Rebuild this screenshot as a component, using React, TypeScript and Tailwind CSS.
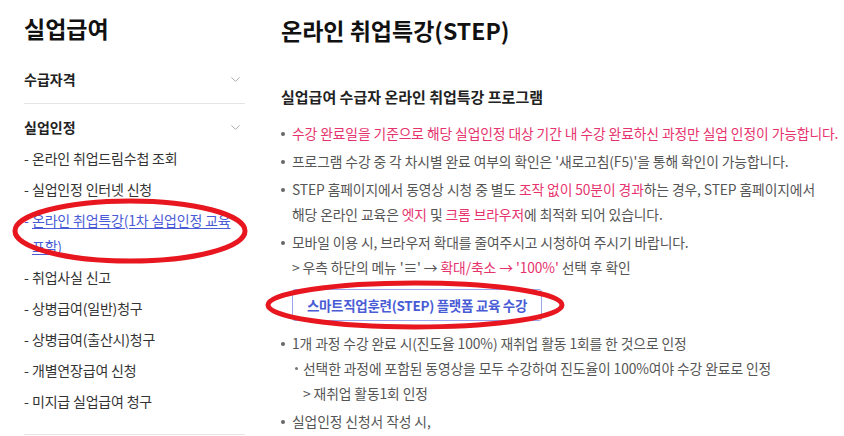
import { ChevronDown } from "lucide-react";

const subItems = [
  { name: "온라인 취업드림수첩 조회" },
  { name: "실업인정 인터넷 신청" },
  { name: "온라인 취업특강(1차 실업인정 교육 포함)", active: true },
  { name: "취업사실 신고" },
  { name: "상병급여(일반)청구" },
  { name: "상병급여(출산시)청구" },
  { name: "개별연장급여 신청" },
  { name: "미지급 실업급여 청구" },
];

function Dot({ small }: { small?: boolean }) {
  return (
    <span
      className={
        small
          ? "mt-[11px] ml-[3px] h-[3px] w-[3px] shrink-0 rounded-full bg-[#777]"
          : "mt-[11px] h-[4px] w-[4px] shrink-0 rounded-full bg-[#666]"
      }
    />
  );
}

function Sidebar() {
  return (
    <aside className="flex w-[221px] shrink-0 flex-col">
      <h1 className="pt-[12px] text-[23px] leading-[32px] font-bold text-[#111]">실업급여</h1>

      {/* 수급자격 */}
      <div className="mt-[24px] flex items-center justify-between border-b border-[#e5e5e5] pb-[13px]">
        <span className="text-[14px] leading-[22px] font-bold text-[#222]">수급자격</span>
        <ChevronDown className="mr-[2px] h-[15px] w-[15px] text-[#999]" strokeWidth={1.3} />
      </div>

      {/* 실업인정 */}
      <div className="mt-[12px] flex items-center justify-between">
        <span className="text-[14px] leading-[22px] font-bold text-[#222]">실업인정</span>
        <ChevronDown className="mr-[2px] h-[15px] w-[15px] text-[#999]" strokeWidth={1.3} />
      </div>

      <ul className="mt-[7px] flex flex-col gap-[5px] border-b border-[#e5e5e5] pb-[20px]">
        {subItems.map((item) => (
          <li key={item.name} className="flex text-[14px] leading-[26px] tracking-[-0.2px] break-keep">
            <span className={item.active ? "w-[8px] shrink-0 text-[#4a5bd6]" : "w-[8px] shrink-0 text-[#333]"}>-</span>
            <span
              className={
                item.active
                  ? "pr-[8px] text-[#4a5bd6] underline underline-offset-2"
                  : "text-[#333]"
              }
            >
              {item.name}
            </span>
          </li>
        ))}
      </ul>
    </aside>
  );
}

function Content() {
  return (
    <main className="flex min-w-0 flex-1 flex-col">
      <h2 className="pt-[13px] text-[23px] leading-[34px] font-bold text-[#111]">온라인 취업특강(STEP)</h2>

      <h3 className="mt-[38px] text-[15px] leading-[24px] font-bold text-[#222]">
        실업급여 수급자 온라인 취업특강 프로그램
      </h3>

      <ul className="mt-[12px] flex flex-col gap-[3px] text-[13.8px] leading-[25px] tracking-[-0.1px] whitespace-nowrap text-[#555]">
        <li className="flex gap-[7px]">
          <Dot />
          <span className="text-[#e6336e]">
            수강 완료일을 기준으로 해당 실업인정 대상 기간 내 수강 완료하신 과정만 실업 인정이 가능합니다.
          </span>
        </li>
        <li className="flex gap-[7px]">
          <Dot />
          <span>프로그램 수강 중 각 차시별 완료 여부의 확인은 '새로고침(F5)'을 통해 확인이 가능합니다.</span>
        </li>
        <li className="flex gap-[7px]">
          <Dot />
          <span>
            STEP 홈페이지에서 동영상 시청 중 별도 <span className="text-[#e6336e]">조작 없이 50분이 경과</span>
            하는 경우, STEP 홈페이지에서
            <br />
            해당 온라인 교육은 <span className="text-[#e6336e]">엣지</span> 및{" "}
            <span className="text-[#e6336e]">크롬 브라우저</span>에 최적화 되어 있습니다.
          </span>
        </li>
        <li className="flex gap-[7px]">
          <Dot />
          <div className="flex flex-col">
            <span>모바일 이용 시, 브라우저 확대를 줄여주시고 시청하여 주시기 바랍니다.</span>
            <span>
              &gt; 우측 하단의 메뉴 '≡' → <span className="text-[#e6336e]">확대/축소 → '100%'</span> 선택 후 확인
            </span>
            <div className="mt-[9px] mb-[7px] flex">
              <button className="h-[32px] w-[250px] rounded-[3px] border border-[#9aa6ee] bg-white text-[13.5px] font-bold tracking-[-0.3px] text-[#4a5bd6]">
                스마트직업훈련(STEP) 플랫폼 교육 수강
              </button>
            </div>
          </div>
        </li>
        <li className="flex gap-[7px]">
          <Dot />
          <div className="flex flex-col">
            <span>1개 과정 수강 완료 시(진도율 100%) 재취업 활동 1회를 한 것으로 인정</span>
            <div className="flex gap-[5px]">
              <Dot small />
              <span>선택한 과정에 포함된 동영상을 모두 수강하여 진도율이 100%여야 수강 완료로 인정</span>
            </div>
            <span className="pl-[11px]">&gt; 재취업 활동1회 인정</span>
          </div>
        </li>
        <li className="flex gap-[7px]">
          <Dot />
          <span>실업인정 신청서 작성 시,</span>
        </li>
      </ul>
    </main>
  );
}

export default function App() {
  return (
    <div
      className="relative h-[436px] w-[844px] overflow-hidden bg-white"
      style={{ fontFamily: '"Noto Sans CJK KR", "Noto Sans", sans-serif' }}
    >
      <div className="flex gap-[36px] pl-[24px]">
        <Sidebar />
        <Content />
      </div>

      {/* red hand-drawn annotations */}
      <svg className="pointer-events-none absolute inset-0" width="844" height="436">
        <ellipse cx="130" cy="231" rx="115" ry="30" fill="none" stroke="#e8161e" strokeWidth="5" />
        <ellipse cx="415" cy="305" rx="147" ry="22" fill="none" stroke="#e8161e" strokeWidth="5" />
      </svg>
    </div>
  );
}
